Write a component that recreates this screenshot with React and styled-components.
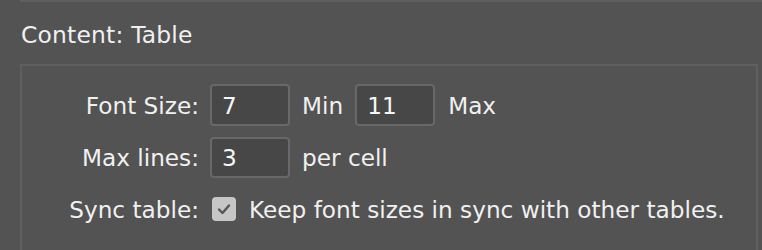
import styled, { createGlobalStyle } from "styled-components";

const GlobalStyle = createGlobalStyle`
  html, body {
    margin: 0;
    padding: 0;
    background: #535353;
  }
  body {
    font-family: "DejaVu Sans", Verdana, sans-serif;
    color: #f0f0f0;
    overflow: hidden;
  }
`;

const Page = styled.div`
  width: 762px;
  height: 250px;
  overflow: hidden;
`;

const TopRule = styled.div`
  margin-left: 20px;
  border-top: 2px solid #5e5e5e;
`;

const Title = styled.div`
  margin: 19px 0 15px 21px;
  font-size: 23.4px;
  letter-spacing: 0.2px;
  line-height: 28px;
`;

const Panel = styled.div`
  margin: 0 4px 0 20px;
  height: 200px;
  border: 2px solid #5f5f5f;
  border-bottom: none;
  padding-top: 18px;
  display: grid;
  grid-template-columns: 177px 1fr;
  column-gap: 11px;
  row-gap: 10px;
  grid-auto-rows: 42px;
  align-content: start;
`;

const Label = styled.div`
  font-size: 23.2px;
  text-align: right;
  align-self: center;
  white-space: nowrap;
`;

const Controls = styled.div`
  display: flex;
  align-items: center;
  gap: ${(p) => p.gap || "12px"};
  font-size: 23.2px;
  white-space: nowrap;
`;

const Field = styled.div`
  box-sizing: border-box;
  width: 80px;
  height: ${(p) => p.h || "42px"};
  border: 2px solid #686868;
  border-radius: 4px;
  background: #474747;
  padding-left: 10px;
  display: flex;
  align-items: center;
  font-size: 23.2px;
  color: #f6f6f6;
`;

const Check = styled.div`
  width: 24px;
  height: 24px;
  border-radius: 4px;
  background: #c6c6c6;
  display: flex;
  align-items: center;
  justify-content: center;
  margin-left: 2px;
`;

export default function App() {
  return (
    <Page>
      <GlobalStyle />
      <TopRule />
      <Title>Content: Table</Title>
      <Panel>
        <Label>Font Size:</Label>
        <Controls>
          <Field>7</Field>
          <span>Min</span>
          <Field>11</Field>
          <span style={{ marginLeft: 1 }}>Max</span>
        </Controls>

        <Label>Max lines:</Label>
        <Controls>
          <Field h="41px">3</Field>
          <span>per cell</span>
        </Controls>

        <Label>Sync table:</Label>
        <Controls gap="13px">
          <Check>
            <svg width="16" height="16" viewBox="0 0 16 16">
              <path
                d="M3 8.5 L6.5 12 L13 4.5"
                fill="none"
                stroke="#555"
                strokeWidth="2.4"
                strokeLinecap="round"
                strokeLinejoin="round"
              />
            </svg>
          </Check>
          <span>Keep font sizes in sync with other tables.</span>
        </Controls>
      </Panel>
    </Page>
  );
}
